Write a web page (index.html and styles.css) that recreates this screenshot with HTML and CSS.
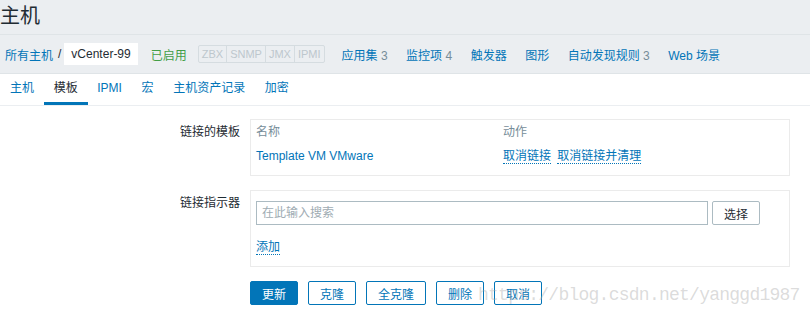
FILE: index.html
```html
<!DOCTYPE html>
<html lang="zh-CN">
<head>
    <meta charset="UTF-8">
    <meta name="viewport" content="width=device-width, initial-scale=1.0">
    <title>主机</title>
    <link rel="stylesheet" href="styles.css">
</head>
<body>
    <header class="header-title">
        <h1>主机</h1>
    </header>
    <div class="host-nav">
        <a href="#" class="nav-link">所有主机</a>
        <span class="separator">/</span>
        <span class="host-name">vCenter-99</span>
        <span class="status-on">已启用</span>
        <span class="iface-group">
            <span class="iface">ZBX</span><span class="iface">SNMP</span><span class="iface">JMX</span><span class="iface">IPMI</span>
        </span>
        <a href="#" class="nav-link nav-first">应用集 <sup>3</sup></a>
        <a href="#" class="nav-link nav-item">监控项 <sup>4</sup></a>
        <a href="#" class="nav-link nav-item">触发器</a>
        <a href="#" class="nav-link nav-item">图形</a>
        <a href="#" class="nav-link nav-item">自动发现规则 <sup>3</sup></a>
        <a href="#" class="nav-link nav-item">Web 场景</a>
    </div>
    <ul class="tabs">
        <li><a href="#">主机</a></li>
        <li class="active"><a href="#">模板</a></li>
        <li><a href="#">IPMI</a></li>
        <li><a href="#">宏</a></li>
        <li><a href="#">主机资产记录</a></li>
        <li><a href="#">加密</a></li>
    </ul>
    <div class="form-list">
        <div class="form-row">
            <label class="form-label">链接的模板</label>
            <div class="form-box box-templates">
                <table class="list-table">
                    <thead>
                        <tr><th class="col-name">名称</th><th>动作</th></tr>
                    </thead>
                    <tbody>
                        <tr>
                            <td><a href="#" class="link">Template VM VMware</a></td>
                            <td>
                                <a href="#" class="link-action">取消链接</a>
                                <a href="#" class="link-action">取消链接并清理</a>
                            </td>
                        </tr>
                    </tbody>
                </table>
            </div>
        </div>
        <div class="form-row">
            <label class="form-label">链接指示器</label>
            <div class="form-box box-link">
                <div class="search-line">
                    <input type="text" class="search-input" placeholder="在此输入搜索">
                    <button class="btn-grey">选择</button>
                </div>
                <a href="#" class="link-action add-link">添加</a>
            </div>
        </div>
        <div class="form-row">
            <span></span>
            <div class="form-actions">
                <button class="btn primary">更新</button>
                <button class="btn">克隆</button>
                <button class="btn">全克隆</button>
                <button class="btn">删除</button>
                <button class="btn">取消</button>
            </div>
        </div>
    </div>
    <div class="watermark">https://blog.csdn.net/yanggd1987</div>
</body>
</html>
```

FILE: styles.css
```css
body {
    margin: 0;
    font-family: 'Liberation Sans', Arial, 'Noto Sans CJK SC', sans-serif;
    font-size: 12px;
    color: #1f2c33;
    background-color: #ffffff;
    position: relative;
    height: 320px;
    overflow: hidden;
}
a {
    text-decoration: none;
    color: #0275b8;
}
.header-title {
    background-color: #ebeef1;
    border-bottom: 1px solid #dfe4e7;
    height: 34px;
}
h1 {
    margin: 0;
    font-size: 20px;
    font-weight: normal;
    line-height: 24px;
    padding: 4px 0 6px 0;
    color: #1f2c33;
}
.host-nav {
    background-color: #ebeef1;
    border-bottom: 1px solid #dfe4e7;
    height: 38px;
    display: flex;
    align-items: center;
    padding-left: 5px;
}
.separator {
    margin: 0 3px 0 5px;
}
.host-name {
    background-color: #ffffff;
    height: 22px;
    line-height: 22px;
    padding: 0 7px;
}
.status-on {
    color: #429e47;
    margin-left: 13px;
}
.iface-group {
    display: flex;
    margin-left: 11px;
    border: 1px solid #d5dce0;
    border-radius: 2px;
}
.iface {
    font-size: 11px;
    color: #bdc7cd;
    height: 16px;
    line-height: 16px;
    padding: 0 3px;
    border-left: 1px solid #d5dce0;
}
.iface:first-child {
    border-left: none;
}
.nav-first {
    margin-left: 17px;
}
.nav-item {
    margin-left: 18.5px;
}
sup {
    vertical-align: baseline;
    font-size: 12px;
    color: #768d99;
}
.tabs {
    list-style: none;
    margin: 0;
    padding: 0;
    display: flex;
    border-bottom: 1px solid #ebeef1;
}
.tabs li {
    margin-right: -0.4px;
}
.tabs a {
    display: block;
    padding: 7px 10px 7px 10px;
    line-height: 14px;
    border-bottom: 3px solid transparent;
}
.tabs .active a {
    color: #1f2c33;
    border-bottom-color: #0275b8;
}
.form-list {
    padding-top: 13px;
}
.form-row {
    display: grid;
    grid-template-columns: 240px 540px;
    column-gap: 10px;
    margin-bottom: 14px;
}
.form-label {
    text-align: right;
    padding-top: 6px;
    line-height: 14px;
}
.form-box {
    border: 1px solid #ebebeb;
    padding: 0 5px;
}
.box-templates {
    padding-bottom: 7px;
}
.list-table {
    border-collapse: collapse;
    width: 100%;
}
.list-table th,
.list-table td {
    text-align: left;
    font-weight: normal;
    padding: 5px 0;
    line-height: 14px;
}
.list-table th {
    color: #768d99;
}
.col-name {
    width: 247px;
}
.link-action {
    border-bottom: 1px dotted #0275b8;
    margin-right: 3px;
}
.box-link {
    padding-top: 10px;
    padding-bottom: 11px;
}
.search-line {
    display: flex;
    gap: 4px;
}
.search-input {
    width: 452px;
    height: 24px;
    box-sizing: border-box;
    border: 1px solid #acbbc2;
    padding: 0 5px;
    font-family: inherit;
    font-size: 12px;
    margin: 0;
}
.search-input::placeholder {
    color: #a0acb3;
}
.btn-grey {
    height: 24px;
    width: 48px;
    box-sizing: border-box;
    border: 1px solid #acbbc2;
    border-radius: 2px;
    background-color: #ffffff;
    font-family: inherit;
    font-size: 12px;
    color: #1f2c33;
    padding: 0;
}
.add-link {
    display: inline-block;
    margin-top: 16px;
    line-height: 13px;
}
.form-actions {
    display: flex;
    gap: 10px;
}
.btn {
    height: 24px;
    padding: 0 11px;
    border: 1px solid #0275b8;
    border-radius: 2px;
    background-color: #ffffff;
    color: #0275b8;
    font-family: inherit;
    font-size: 12px;
}
.btn.primary {
    background-color: #0275b8;
    color: #ffffff;
}
.watermark {
    position: absolute;
    left: 478px;
    top: 285px;
    font-family: 'Liberation Mono', monospace;
    font-size: 18px;
    letter-spacing: -0.75px;
    color: rgba(170, 170, 170, 0.42);
    white-space: nowrap;
}
```
